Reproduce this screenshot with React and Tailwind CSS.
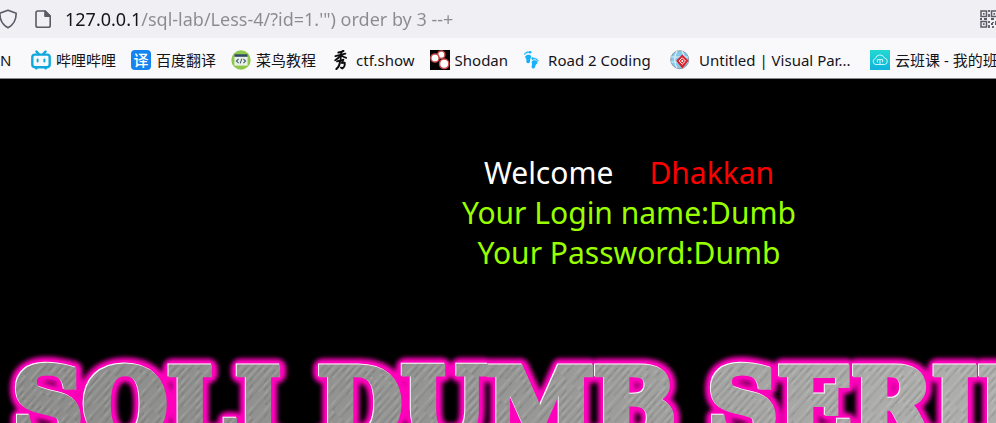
import React, { useState } from 'react';

const BilibiliIcon = () => (
    <svg viewBox="0 0 20 20" className="w-5 h-5" fill="none" stroke="#0fa9dc" strokeWidth="2.4" strokeLinecap="round" strokeLinejoin="round">
        <path d="M5.5 1.6l2.4 2.6M14.5 1.6l-2.4 2.6" />
        <rect x="1.3" y="4.6" width="17.4" height="12.6" rx="2.6" />
        <path d="M6.6 9.4v2.2M13.4 9.4v2.2M5 18.4h.6M14.4 18.4h.6" strokeWidth="2" />
    </svg>
);

const TranslateIcon = () => (
    <span className="w-5 h-5 rounded bg-[#1484f0] text-white text-[15px] leading-5 text-center font-medium">译</span>
);

const RunoobIcon = () => (
    <svg viewBox="0 0 20 20" className="w-5 h-5">
        <circle cx="10" cy="10" r="9.7" fill="#8dc84b" />
        <rect x="3.4" y="4.4" width="13.2" height="11.2" fill="#e9f0ea" />
        <rect x="3.4" y="4.2" width="13.2" height="2.6" fill="#2f4a5c" />
        <path d="M7.6 9L5.4 11l2.2 2M12.4 9l2.2 2-2.2 2M10.8 8.6l-1.6 4.8" fill="none" stroke="#4b6170" strokeWidth="1.1" />
    </svg>
);

const CtfIcon = () => (
    <svg viewBox="0 0 20 20" className="w-5 h-5" fill="none" stroke="#0c0c0c" strokeLinecap="round" strokeLinejoin="round">
        <path d="M12.4.9C11 2 9 2.4 7.4 2.6" strokeWidth="2" />
        <path d="M4.4 6.2l5-1.4 5-1.2" strokeWidth="1.8" />
        <path d="M10.2 2.4L9.6 9.2M9.4 5.2C8 7.6 6.4 9 4.2 10.2M10.2 5c1.4 1.6 3 2.4 5 2.8" strokeWidth="1.8" />
        <path d="M6 11.4l6.4-1.8-1.6 3.4 3-.4c.2 2.6-.6 4.8-2.4 6l-1.6-1" strokeWidth="1.8" />
        <path d="M9 11c0 3.6-1.4 6-3.6 8" strokeWidth="2.1" />
    </svg>
);

const ShodanIcon = () => (
    <svg viewBox="0 0 20 20" className="w-5 h-5">
        <rect width="20" height="20" fill="#050101" />
        <g fill="#fff" stroke="#c94b4e" strokeWidth="1.5">
            <circle cx="11.3" cy="4.7" r="3.6" />
            <circle cx="5" cy="8" r="4.1" />
            <circle cx="14.2" cy="13.8" r="4.7" />
        </g>
    </svg>
);

const FootprintsIcon = () => (
    <svg viewBox="0 0 20 20" className="w-5 h-5" fill="#18b1f5">
        <path d="M2.3 6.2c.8-1.8 4.800-2.200 5.700-.4.700 1.600-.7 2.600-.9 4 .2 1.800-.4 3.600-2 3.500-1.800 0-2-1.800-1.700-3.200C3.600 8.600 1.700 7.600 2.300 6.200z" />
        <circle cx="1.900" cy="3.9" r=".8" />
        <circle cx="3.300" cy="2.7" r=".9" />
        <circle cx="5" cy="2.2" r=".9" />
        <circle cx="7.200" cy="2.3" r="1.3" />
        <path d="M9 11.200c1-1.600 5-1 5.500.7.400 1.600-1.400 2.200-2 3.400-.2 1.800-1 3.500-2.600 3.200-1.700-.4-1.500-2.200-.9-3.500.4-1.300-.8-2.300 0-3.800z" />
        <circle cx="9.700" cy="8.6" r="1.3" />
        <circle cx="11.900" cy="8.7" r=".9" />
        <circle cx="13.600" cy="9.5" r=".9" />
        <circle cx="14.900" cy="10.8" r=".8" />
    </svg>
);

const ParadigmIcon = () => (
    <svg viewBox="0 0 20 20" className="w-5 h-5">
        <circle cx="9.7" cy="9.7" r="9" fill="#86c8ea" stroke="#8d9ba5" strokeWidth="1" />
        <path d="M1 7h17M1 12h17M7 1c-3 5-3 12 0 17M12 1c3 5 3 12 0 17" fill="none" stroke="#d9f0fa" strokeWidth="1.2" />
        <path d="M12.3 4.5l6.200 6.300-6.200 7.700-6.200-7.700z" fill="#d9222a" />
        <path d="M12.3 7.8l3.2 3.2-3.2 3.2-3.2-3.2z" fill="none" stroke="#fff" strokeWidth="1" />
        <path d="M12.3 9.7l1.3 1.3-1.3 1.3-1.3-1.3z" fill="#fff" />
    </svg>
);

const CloudClassIcon = () => (
    <svg viewBox="0 0 20 20" className="w-5 h-5">
        <defs>
            <linearGradient id="cloudBg" x1="0" y1="0" x2="0" y2="1">
                <stop offset="0" stopColor="#23d9d2" />
                <stop offset="1" stopColor="#10b3dc" />
            </linearGradient>
        </defs>
        <rect width="20" height="20" fill="url(#cloudBg)" />
        <path d="M6 14.5a3 3 0 0 1-.6-5.9 4.7 4.7 0 0 1 9-.6 3.3 3.3 0 0 1 .3 6.5zM7.4 12.3V9.5h5.2v2.8M10 10v4" fill="none" stroke="#c9f7f8" strokeWidth="1" />
    </svg>
);

const QrIcon = () => (
    <svg viewBox="0 0 18 18" className="w-[18px] h-[18px] shrink-0" fill="none" stroke="#5b5b66" strokeWidth="1.5">
        <path d="M1 1h5.5v5.5H1zM11.5 1H17v5.5h-5.5zM1 11.5h5.5V17H1z" />
        <path d="M3 3.8h1.6M13.4 3.8H15M3 14.2h1.6M9 0v2M9 4v3M0 9h2M4 9h3M11 9h3M16 9h2M9 11v2M9 15v3M11 14h2M13 12v1M15 14h2M13 16v2M16 11v2" strokeWidth="1.8" />
    </svg>
);

const bookmarks = [
    { title: '哔哩哔哩', icon: <BilibiliIcon /> },
    { title: '百度翻译', icon: <TranslateIcon /> },
    { title: '菜鸟教程', icon: <RunoobIcon /> },
    { title: 'ctf.show', icon: <CtfIcon /> },
    { title: 'Shodan', icon: <ShodanIcon /> },
    { title: 'Road 2 Coding', icon: <FootprintsIcon />, width: 'min-w-[107px]' },
    { title: 'Untitled | Visual Par...', icon: <ParadigmIcon />, width: 'min-w-[160px] pl-1' },
    { title: '云班课 - 我的班', icon: <CloudClassIcon /> },
];

const AddressBar = () => {
    const [url, setUrl] = useState('127.0.0.1/sql-lab/Less-4/?id=1.\'") order by 3 --+');

    return (
        <div className="h-[38px] flex items-center bg-[#f0eff4]">
            <svg viewBox="0 0 20 20" className="w-5 h-5 -ml-0.5 shrink-0" fill="none" stroke="#5b5b66" strokeWidth="1.6" strokeLinejoin="round">
                <path d="M10 1.2l8.2 3.1c0 6.5-2.2 11.3-8.2 14.5C4 15.600 1.800 10.800 1.800 4.300z" />
            </svg>
            <svg viewBox="0 0 16 18" className="w-4 h-[18px] ml-[17px] shrink-0" fill="none" stroke="#5b5b66" strokeWidth="1.6" strokeLinejoin="round">
                <path d="M2.8 1h7.4l5 5v9.4a1.8 1.8 0 0 1-1.8 1.8H2.8A1.8 1.8 0 0 1 1 15.4V2.8A1.8 1.8 0 0 1 2.8 1z" />
                <path d="M10 1v5.2h5.2z" fill="#5b5b66" />
            </svg>
            {/* host is dark, the rest of the address is dimmed */}
            <input
                type="text"
                aria-label="Address"
                value={url}
                onChange={(e) => setUrl(e.target.value)}
                className="flex-1 min-w-0 ml-3.5 text-[18px] leading-6 outline-none text-transparent bg-clip-text bg-[linear-gradient(to_right,#15141a_76px,#8b8a91_76px)]"
            />
            <button type="button" aria-label="QR code" className="-mr-0.5">
                <QrIcon />
            </button>
        </div>
    );
};

const BookmarksBar = () => (
    <nav className="h-10 pt-1 flex items-center gap-[15px] bg-[#f9f9fb] text-[#15141a] text-[15px] leading-5 whitespace-nowrap">
        <a href="#" className="w-4 shrink-0">N</a>
        {bookmarks.map((b) => (
            <a key={b.title} href="#" className="flex items-center gap-[5px] shrink-0">
                {b.icon}
                <span className={b.width}>{b.title}</span>
            </a>
        ))}
    </nav>
);

const Banner = () => (
    <svg viewBox="0 0 1258 110" className="w-[1258px] h-[110px] max-w-none" role="img" aria-label="SQLI DUMB SERIES">
        <defs>
            <linearGradient id="metal" gradientUnits="userSpaceOnUse" x1="0" y1="0" x2="1258" y2="0">
                <stop offset="0" stopColor="#8c8c8b" />
                <stop offset="0.4" stopColor="#969695" />
                <stop offset="0.7" stopColor="#acacaa" />
                <stop offset="1" stopColor="#b0b0ae" />
            </linearGradient>
            <pattern id="brushed" width="23" height="60" patternUnits="userSpaceOnUse" patternTransform="rotate(42)">
                <path d="M2 0v41M9 8v52M14 0v32M20 12v48" stroke="#000" strokeOpacity=".1" strokeWidth="1" />
                <path d="M5 0v60M11 0v36M17 9v51M22 0v30" stroke="#fff" strokeOpacity=".12" strokeWidth="1" />
            </pattern>
            <filter id="glow" x="-5%" y="-20%" width="110%" height="140%">
                <feGaussianBlur stdDeviation="2" />
            </filter>
            <g id="title" fontFamily="'DejaVu Serif', serif" fontWeight="700" fontSize="97">
                <text y="86">
                    <tspan x="13">SQLI</tspan>
                    <tspan x="318">DUMB</tspan>
                    <tspan x="708">SERIES</tspan>
                </text>
            </g>
        </defs>
        <use href="#title" fill="#f0b" stroke="#f0b" strokeWidth="19" strokeLinejoin="round" filter="url(#glow)" />
        <use href="#title" fill="#f0b" stroke="#f0b" strokeWidth="13" strokeLinejoin="round" />
        <use href="#title" x="-1" y="-1" fill="#fff" stroke="#fff" strokeWidth="7" />
        <use href="#title" fill="url(#metal)" stroke="url(#metal)" strokeWidth="7" />
        <use href="#title" fill="url(#brushed)" stroke="url(#brushed)" strokeWidth="7" />
    </svg>
);

const App = () => (
    <div className="h-screen overflow-hidden flex flex-col bg-black font-['Noto_Sans','Noto_Sans_CJK_SC',sans-serif]">
        <header className="shrink-0 border-b border-[#8a8a8c]">
            <AddressBar />
            <BookmarksBar />
        </header>
        <main className="flex-1 min-h-0 pt-[74px]">
            <div className="pl-[262px] text-center text-[30px] leading-10 text-[#99ff00]">
                <h1 className="text-white">
                    Welcome<span className="ml-9 text-[#ff0000]">Dhakkan</span>
                </h1>
                <p>Your Login name:Dumb</p>
                <p>Your Password:Dumb</p>
            </div>
            <div className="mt-20 overflow-hidden">
                <Banner />
            </div>
        </main>
    </div>
);

export default App;
